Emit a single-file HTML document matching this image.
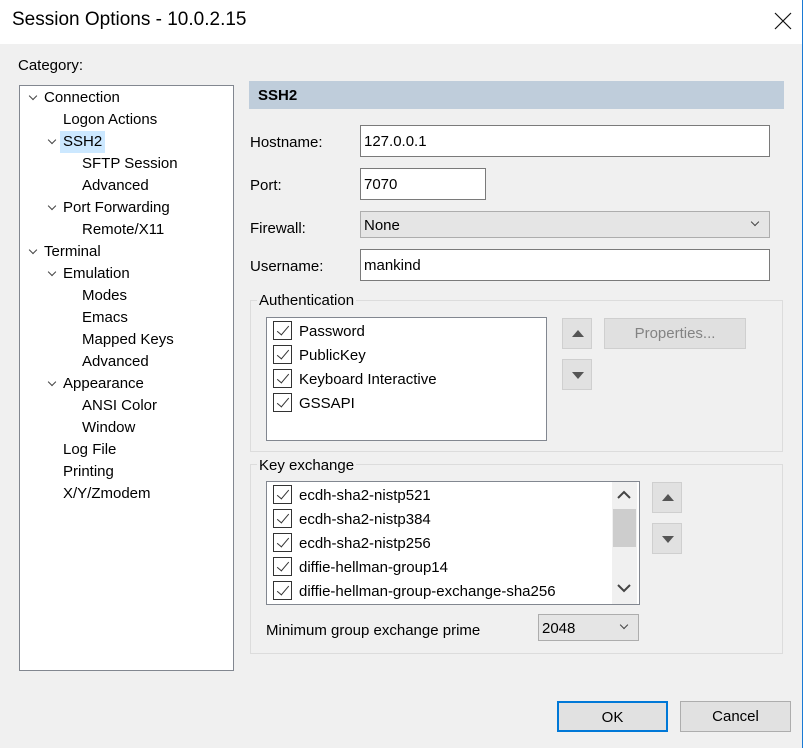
<!DOCTYPE html>
<html><head><meta charset="utf-8"><style>
*{margin:0;padding:0;box-sizing:border-box}
body{width:811px;height:748px;background:#f0f0f0;font-family:"Liberation Sans",sans-serif;font-size:15px;color:#000;position:relative;overflow:hidden}
.a{position:absolute;white-space:nowrap}
.tb{left:0;top:0;width:802px;height:44px;background:#fff}
.edge{left:802px;top:0;width:9px;height:748px;background:#fff;border-left:1px solid #1a7ad4}
.tree{left:19px;top:85px;width:215px;height:586px;background:#fff;border:1px solid #828790}
.ti{position:absolute;height:22px;line-height:22px;top:1px}
.chev{position:absolute;width:6px;height:6px;border-right:1.5px solid #444;border-bottom:1.5px solid #444;transform:rotate(45deg)}
.inp{background:#fff;border:1px solid #7a7a7a;height:32px;line-height:30px;padding-left:3px}
.grp{border:1px solid #dcdcdc}
.lab{background:#f0f0f0;padding:0 2px}
.list{background:#fff;border:1px solid #828790}
.cb{position:absolute;width:19px;height:19px;border:1px solid #333;background:#fff}
.cb:after{content:"";position:absolute;left:6px;top:1px;width:5px;height:11px;border-right:1.5px solid #333;border-bottom:1.5px solid #333;transform:rotate(40deg)}
.ar{background:#e1e1e1;border:1px solid #cfcfcf;width:30px;height:31px}
.tri{position:absolute;left:9px;width:0;height:0;border-left:6px solid transparent;border-right:6px solid transparent}
.btn{background:#e1e1e1;border:1px solid #adadad;text-align:center;line-height:30px;height:31px}
</style></head><body>
<div class="a tb"></div>
<div class="a" style="left:12px;top:9px;font-size:19px">Session Options - 10.0.2.15</div>
<svg class="a" style="left:774px;top:12px" width="18" height="18"><path d="M1 1L17 17M17 1L1 17" stroke="#111" stroke-width="1.2"/></svg>
<div class="a edge"></div>
<div class="a" style="left:18px;top:57px">Category:</div>
<div class="a tree">
<div class="ti" style="left:24px;top:1px">Connection</div><div class="chev" style="left:10px;top:7px"></div>
<div class="ti" style="left:43px;top:23px">Logon Actions</div>
<div class="ti" style="left:40px;top:45px;background:#cce8ff;padding:0 3px">SSH2</div><div class="chev" style="left:29px;top:51px"></div>
<div class="ti" style="left:62px;top:67px">SFTP Session</div>
<div class="ti" style="left:62px;top:89px">Advanced</div>
<div class="ti" style="left:43px;top:111px">Port Forwarding</div><div class="chev" style="left:29px;top:117px"></div>
<div class="ti" style="left:62px;top:133px">Remote/X11</div>
<div class="ti" style="left:24px;top:155px">Terminal</div><div class="chev" style="left:10px;top:161px"></div>
<div class="ti" style="left:43px;top:177px">Emulation</div><div class="chev" style="left:29px;top:183px"></div>
<div class="ti" style="left:62px;top:199px">Modes</div>
<div class="ti" style="left:62px;top:221px">Emacs</div>
<div class="ti" style="left:62px;top:243px">Mapped Keys</div>
<div class="ti" style="left:62px;top:265px">Advanced</div>
<div class="ti" style="left:43px;top:287px">Appearance</div><div class="chev" style="left:29px;top:293px"></div>
<div class="ti" style="left:62px;top:309px">ANSI Color</div>
<div class="ti" style="left:62px;top:331px">Window</div>
<div class="ti" style="left:43px;top:353px">Log File</div>
<div class="ti" style="left:43px;top:375px">Printing</div>
<div class="ti" style="left:43px;top:397px">X/Y/Zmodem</div>
</div>
<div class="a" style="left:249px;top:81px;width:535px;height:28px;background:#bfcddb;font-weight:bold;line-height:30px;padding-left:9px">SSH2</div>
<div class="a" style="left:250px;top:134px">Hostname:</div>
<div class="a inp" style="left:360px;top:125px;width:410px;line-height:31px">127.0.0.1</div>
<div class="a" style="left:250px;top:177px">Port:</div>
<div class="a inp" style="left:360px;top:168px;width:126px;line-height:31px">7070</div>
<div class="a" style="left:250px;top:220px">Firewall:</div>
<div class="a inp" style="left:360px;top:211px;width:410px;height:27px;line-height:27px;background:#e5e5e5;border-color:#adadad">None</div>
<div class="a chev" style="left:752px;top:219px;width:6px;height:6px;border-width:1px"></div>
<div class="a" style="left:250px;top:258px">Username:</div>
<div class="a inp" style="left:360px;top:249px;width:410px;line-height:31px">mankind</div>
<div class="a grp" style="left:250px;top:300px;width:533px;height:152px"></div>
<div class="a lab" style="left:257px;top:292px">Authentication</div>
<div class="a list" style="left:266px;top:317px;width:281px;height:124px"></div>
<div class="a cb" style="left:273px;top:321px"></div><div class="a" style="left:299px;top:323px">Password</div>
<div class="a cb" style="left:273px;top:345px"></div><div class="a" style="left:299px;top:347px">PublicKey</div>
<div class="a cb" style="left:273px;top:369px"></div><div class="a" style="left:299px;top:371px">Keyboard Interactive</div>
<div class="a cb" style="left:273px;top:393px"></div><div class="a" style="left:299px;top:395px">GSSAPI</div>
<div class="a ar" style="left:562px;top:318px"><div class="tri" style="top:11px;border-bottom:7px solid #555"></div></div>
<div class="a ar" style="left:562px;top:359px"><div class="tri" style="top:12px;border-top:7px solid #555"></div></div>
<div class="a btn" style="left:604px;top:318px;width:142px;color:#838383;border-color:#cfcfcf;background:#e0e0e0">Properties...</div>
<div class="a grp" style="left:250px;top:464px;width:533px;height:190px"></div>
<div class="a lab" style="left:257px;top:457px">Key exchange</div>
<div class="a list" style="left:266px;top:481px;width:374px;height:124px"></div>
<div class="a" style="left:612px;top:482px;width:25px;height:122px;background:#f0f0f0"></div>
<div class="a" style="left:613px;top:509px;width:23px;height:38px;background:#cdcdcd"></div>
<svg class="a" style="left:617px;top:490px" width="14" height="10"><path d="M1 8L7 2L13 8" stroke="#444" stroke-width="2" fill="none"/></svg>
<svg class="a" style="left:617px;top:583px" width="14" height="10"><path d="M1 2L7 8L13 2" stroke="#444" stroke-width="2" fill="none"/></svg>
<div class="a cb" style="left:273px;top:485px"></div><div class="a" style="left:299px;top:487px">ecdh-sha2-nistp521</div>
<div class="a cb" style="left:273px;top:509px"></div><div class="a" style="left:299px;top:511px">ecdh-sha2-nistp384</div>
<div class="a cb" style="left:273px;top:533px"></div><div class="a" style="left:299px;top:535px">ecdh-sha2-nistp256</div>
<div class="a cb" style="left:273px;top:557px"></div><div class="a" style="left:299px;top:559px">diffie-hellman-group14</div>
<div class="a cb" style="left:273px;top:581px"></div><div class="a" style="left:299px;top:583px">diffie-hellman-group-exchange-sha256</div>
<div class="a ar" style="left:652px;top:482px"><div class="tri" style="top:11px;border-bottom:7px solid #555"></div></div>
<div class="a ar" style="left:652px;top:523px"><div class="tri" style="top:12px;border-top:7px solid #555"></div></div>
<div class="a" style="left:266px;top:622px">Minimum group exchange prime</div>
<div class="a inp" style="left:538px;top:614px;width:101px;height:27px;line-height:27px;background:#e5e5e5;border-color:#adadad">2048</div>
<div class="a chev" style="left:621px;top:622px;width:6px;height:6px;border-width:1px"></div>
<div class="a btn" style="left:557px;top:701px;width:111px;border:2px solid #0078d7;line-height:30px">OK</div>
<div class="a btn" style="left:680px;top:701px;width:111px">Cancel</div>
</body></html>
